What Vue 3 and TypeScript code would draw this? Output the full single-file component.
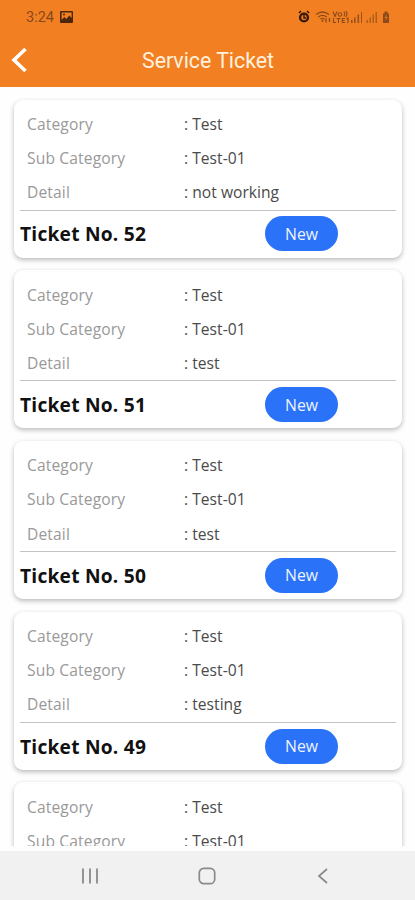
<script setup lang="ts">
interface Ticket {
  no: number
  category: string
  sub: string
  detail: string
  status: string
}

const tickets: Ticket[] = [
  { no: 52, category: 'Test', sub: 'Test-01', detail: 'not working', status: 'New' },
  { no: 51, category: 'Test', sub: 'Test-01', detail: 'test', status: 'New' },
  { no: 50, category: 'Test', sub: 'Test-01', detail: 'test', status: 'New' },
  { no: 49, category: 'Test', sub: 'Test-01', detail: 'testing', status: 'New' },
]
const upcoming = { category: 'Test', sub: 'Test-01' }
</script>

<template>
  <div class="screen">
    <header class="top">
      <div class="status-bar">
        <span class="time">3:24</span>
        <svg class="photo" width="13" height="12" viewBox="0 0 13 12">
          <path fill-rule="evenodd" fill="#4b260d" d="M1 0h11a1 1 0 0 1 1 1v10a1 1 0 0 1-1 1H1a1 1 0 0 1-1-1V1a1 1 0 0 1 1-1zM1.600 1.500v7.500l2.700-3 2 2 3-3.500 2.300 2.500V1.500z" />
          <circle cx="4" cy="3.500" r="1" fill="#4b260d" />
        </svg>
        <svg class="indicators" width="96" height="16" viewBox="0 0 96 16">
          <g fill="none" stroke="#35180a">
            <circle cx="7" cy="8.500" r="3.900" stroke-width="2.400" />
            <path d="M7 6v3h2M2 4l2-2M12 4l-2-2" stroke-width="1.500" />
          </g>
          <g fill="none" stroke="#8b4a1b" stroke-width="1.300">
            <path d="M19 5.500q6.500-5 13 0M21.200 8q4.300-3.200 8.600 0M23.500 10.200q2-1.500 4 0" />
            <path d="M29 9.500v4M32.500 13V9" />
          </g>
          <g fill="#8b4a1b">
            <circle cx="25.500" cy="12" r="1" />
            <path d="M54 11h1.600v3H54zM57 8.500h1.600V14H57zM60.500 5.500h1.600V14h-1.600zM64 3h1V14h-1z" opacity=".85" />
            <path d="M69.500 11h1.500v3h-1.500zM72.500 8.500H74V14h-1.500zM75.500 5.500H77V14h-1.500zM78.500 3H80V14h-1.500z" opacity=".65" />
            <path d="M86 4.500h1.500V2.500h3v2H92v9.500h-6z" />
          </g>
          <g fill="none" stroke="#8b4a1b" stroke-width="1.100">
            <path d="M36 2.500l2 5 2-5M47 2.500q1.500 2.500 0 5M49 2q2 3 0 6M36.500 9v4.500h2.500M39.500 9.500h4M41.500 9.500V14M48 9.500h-2.700v4H48M45.300 11.500h2.200M49.500 10l1.500-1v5" />
            <circle cx="43" cy="5.500" r="1.800" />
          </g>
          <path d="M89.500 5l-2 4h1.500l-.500 3 2.500-4h-1.700z" fill="#d87522" />
        </svg>
      </div>
      <div class="title-bar">
        <svg class="back" width="17" height="26" viewBox="0 0 17 26">
          <path d="M14.500 2L3 13l11.500 11" fill="none" stroke="#fff" stroke-width="3.600" />
        </svg>
        <h1>Service Ticket</h1>
      </div>
    </header>

    <main class="list">
      <article v-for="t in tickets" :key="t.no" class="card">
        <dl>
          <dt>Category</dt><dd>: {{ t.category }}</dd>
          <dt>Sub Category</dt><dd>: {{ t.sub }}</dd>
          <dt>Detail</dt><dd>: {{ t.detail }}</dd>
        </dl>
        <footer>
          <strong>Ticket No. {{ t.no }}</strong>
          <button>{{ t.status }}</button>
        </footer>
      </article>
      <article class="card">
        <dl>
          <dt>Category</dt><dd>: {{ upcoming.category }}</dd>
          <dt>Sub Category</dt><dd>: {{ upcoming.sub }}</dd>
        </dl>
      </article>
    </main>

    <nav class="nav">
      <svg width="18" height="18" viewBox="0 0 18 18"><path d="M2 1.500v15M9 1.500v15M16 1.500v15" stroke="#8a8a8a" stroke-width="1.800" /></svg>
      <svg width="18" height="18" viewBox="0 0 18 18"><rect x="1.300" y="1.300" width="15.400" height="15.400" rx="4.500" fill="none" stroke="#8a8a8a" stroke-width="1.700" /></svg>
      <svg width="18" height="18" viewBox="0 0 18 18"><path d="M13 2L5 9l8 7" fill="none" stroke="#8a8a8a" stroke-width="1.700" /></svg>
    </nav>
  </div>
</template>

<style>
body { margin: 0; }
</style>

<style scoped>
.screen {
  display: flex;
  flex-direction: column;
  width: 415px;
  height: 900px;
  overflow: hidden;
  background: #fefefe;
  font-family: "Open Sans", "Noto Sans", sans-serif;
}
.top {
  flex: none;
  height: 86.500px;
  background: #f28022;
}
.status-bar {
  display: flex;
  align-items: center;
  height: 34px;
  padding: 0 22px 0 26px;
}
.time {
  width: 34px;
  color: #87491c;
  font: 14.500px Roboto, sans-serif;
}
.photo { margin-top: -1px; }
.indicators { margin-left: auto; }
.title-bar {
  display: grid;
  grid-template-columns: 28px 1fr 28px;
  align-items: center;
  height: 52px;
}
.back { margin-left: 11px; margin-top: -1px; }
h1 {
  margin: 2px 0 0 1px;
  text-align: center;
  color: #fff1df;
  font: 400 21.300px/26px Roboto, sans-serif;
}
.list {
  display: flex;
  flex: none;
  flex-direction: column;
  gap: 12.700px;
  box-sizing: border-box;
  height: 759.500px;
  padding: 13px 13px 0 14px;
  overflow: hidden;
}
.card {
  flex: none;
  box-sizing: border-box;
  height: 158px;
  padding: 7.400px 6px 0 6px;
  border-radius: 9px;
  background: #fff;
  box-shadow: 0 2px 5px rgba(0, 0, 0, .27);
}
dl {
  display: grid;
  grid-template-columns: 157px 1fr;
  grid-auto-rows: 34.200px;
  box-sizing: border-box;
  height: 102.800px;
  margin: 0;
  padding-left: 7px;
  font-size: 15.600px;
  line-height: 34px;
}
dt {
  color: #999;
  letter-spacing: .14px;
}
dd {
  margin: 0;
  color: #4a4a4a;
  letter-spacing: .03px;
}
footer {
  display: flex;
  align-items: center;
  justify-content: space-between;
  height: 46.500px;
  padding-right: 58px;
  border-top: 1.500px solid #c3c3c3;
}
strong {
  color: #111;
  font-size: 19.200px;
  font-weight: 700;
  letter-spacing: .22px;
}
button {
  width: 73px;
  height: 35px;
  padding: 0;
  border: 0;
  border-radius: 18px;
  background: #2a72f8;
  color: #eef4ff;
  font: 15.800px "Open Sans", sans-serif;
}
.nav {
  display: flex;
  align-items: center;
  justify-content: space-between;
  flex: none;
  box-sizing: border-box;
  height: 49px;
  margin-top: auto;
  padding: 0 83px 0 81px;
  background: #f1f1f1;
}
</style>
